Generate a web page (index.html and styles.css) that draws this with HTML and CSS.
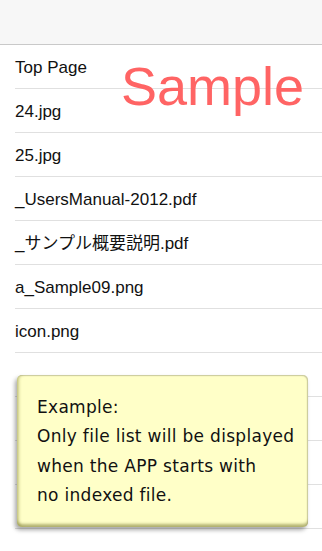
FILE: index.html
```html
<!DOCTYPE html>
<html>
<head>
    <meta charset="UTF-8">
    <meta name="viewport" content="width=device-width, initial-scale=1.0">
    <title>File List</title>
    <link rel="stylesheet" href="styles.css">
</head>
<body>
    <div class="screen">
        <div class="nav-bar"></div>
        <ul class="file-list">
            <li class="row">Top Page</li>
            <li class="row">24.jpg</li>
            <li class="row">25.jpg</li>
            <li class="row">_UsersManual-2012.pdf</li>
            <li class="row">_サンプル概要説明.pdf</li>
            <li class="row">a_Sample09.png</li>
            <li class="row">icon.png</li>
            <li class="row"></li>
            <li class="row"></li>
            <li class="row"></li>
            <li class="row"></li>
        </ul>

        <div class="sample-mark">Sample</div>

        <div class="note">
            <p>Example:</p>
            <p>Only file list will be displayed<br>when the APP starts with<br>no indexed file.</p>
        </div>
    </div>
</body>
</html>
```

FILE: styles.css
```css
/* Reset and Base Styles */
* {
    margin: 0;
    padding: 0;
    box-sizing: border-box;
}

body {
    background-color: #fff;
    font-family: 'Liberation Sans', 'Noto Sans CJK JP', sans-serif;
    color: #111;
}

.screen {
    position: relative;
    width: 322px;
    height: 551px;
    overflow: hidden;
}

.nav-bar {
    height: 45px;
    background-color: #f7f7f7;
    border-bottom: 1px solid #c9c9c9;
}

.file-list {
    list-style: none;
}

.row {
    display: flex;
    align-items: center;
    height: 44px;
    margin-left: 15px;
    padding-top: 3px;
    border-bottom: 1px solid #e0e0e0;
    font-size: 17px;
    line-height: 20px;
    white-space: nowrap;
}

.sample-mark {
    position: absolute;
    left: 121px;
    top: 59px;
    font-size: 54px;
    line-height: 1;
    color: #ff6464;
}

.note {
    position: absolute;
    left: 17px;
    top: 375px;
    width: 291px;
    height: 152px;
    padding: 18px 6px 0 20px;
    background-color: #ffffc8;
    border-radius: 5px;
    box-shadow:
        inset 3px 0 3px -1px rgba(140, 140, 60, 0.45),
        inset 0 -4px 3px -1px rgba(120, 120, 50, 0.55),
        inset -1px 1px 1px rgba(160, 160, 130, 0.5),
        -2px 3px 4px rgba(0, 0, 0, 0.35);
    font-family: 'DejaVu Sans', sans-serif;
    font-size: 17px;
    letter-spacing: 0.3px;
    line-height: 29.3px;
    white-space: nowrap;
    color: #111;
}
```
